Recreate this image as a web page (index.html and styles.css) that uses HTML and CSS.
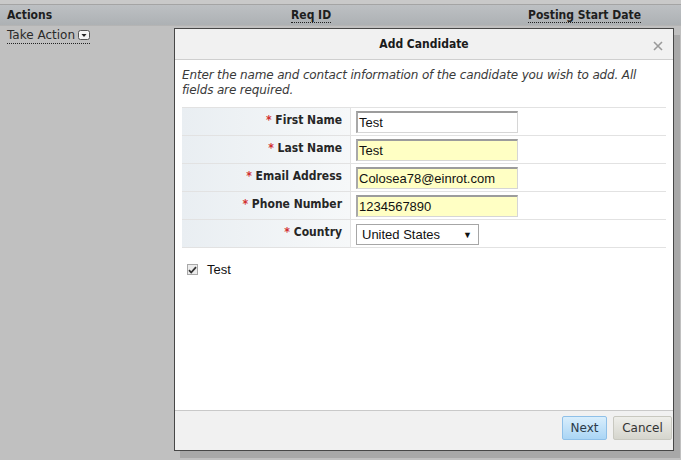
FILE: index.html
```html
<!DOCTYPE html>
<html>
<head>
<meta charset="utf-8">
<link rel="stylesheet" href="styles.css">
</head>
<body>
<div class="page">
  <div class="topstrip"></div>
  <div class="grid-head">
    <div class="col col-actions">Actions</div>
    <div class="col col-req"><span class="dotted">Req ID</span></div>
    <div class="col col-date"><span class="dotted">Posting Start Date</span></div>
  </div>
  <div class="grid-row">
    <span class="take dotted">Take Action <span class="ddicon"><svg width="12" height="10" viewBox="0 0 12 10"><rect x="0.5" y="0.5" width="11" height="9" rx="2" fill="#f4f4f4" stroke="#555"/><path d="M3.5 4h5L6 7z" fill="#222"/></svg></span></span>
  </div>
</div>

<div class="dialog">
  <div class="dlg-head">
    <span class="dlg-title">Add Candidate</span>
    <span class="dlg-close"><svg width="10" height="10" viewBox="0 0 10 10"><path d="M1 1L9 9M9 1L1 9" stroke="#9a9a9a" stroke-width="1.6"/></svg></span>
  </div>
  <div class="dlg-body">
    <p class="intro">Enter the name and contact information of the candidate you wish to add. All fields are required.</p>
    <div class="form">
      <div class="frow">
        <div class="flabel"><span class="req">*</span> First Name</div>
        <div class="fval"><div class="inp">Test</div></div>
      </div>
      <div class="frow">
        <div class="flabel"><span class="req">*</span> Last Name</div>
        <div class="fval"><div class="inp yellow">Test</div></div>
      </div>
      <div class="frow">
        <div class="flabel"><span class="req">*</span> Email Address</div>
        <div class="fval"><div class="inp yellow">Colosea78@einrot.com</div></div>
      </div>
      <div class="frow">
        <div class="flabel"><span class="req">*</span> Phone Number</div>
        <div class="fval"><div class="inp yellow">1234567890</div></div>
      </div>
      <div class="frow">
        <div class="flabel"><span class="req">*</span> Country</div>
        <div class="fval"><div class="sel"><span>United States</span><span class="arrow">&#9660;</span></div></div>
      </div>
    </div>
    <div class="check">
      <span class="cbox"><svg width="9" height="8" viewBox="0 0 9 8"><path d="M1 4.2l2.2 2.3L8 1.2" fill="none" stroke="#333" stroke-width="1.8"/></svg></span>
      <span class="clabel">Test</span>
    </div>
  </div>
  <div class="dlg-foot">
    <button class="btn btn-next">Next</button>
    <button class="btn btn-cancel">Cancel</button>
  </div>
</div>
</body>
</html>
```
FILE: styles.css
```css
html, body {
  margin: 0;
  padding: 0;
}
body {
  background: #c0c0c0;
  font-family: "DejaVu Sans", Verdana, sans-serif;
  font-size: 12px;
  color: #222;
  width: 681px;
  height: 460px;
  overflow: hidden;
  position: relative;
}
.topstrip {
  height: 4px;
  background: #c9c9c9;
  border-bottom: 1px solid #a4a4a4;
}
.grid-head {
  height: 20px;
  background: linear-gradient(#bdc0c3, #adb1b4);
  display: flex;
  align-items: center;
  font-family: "DejaVu Sans Condensed", "DejaVu Sans", sans-serif;
  font-stretch: condensed;
  font-weight: bold;
  font-size: 12px;
  color: #1e1e1e;
  border-bottom: 1px solid #b4b4b4;
}
.col-actions { padding-left: 7px; width: 284px; }
.col-req { width: 237px; }
.dotted {
  border-bottom: 1px dotted #222;
}
.grid-row {
  padding: 2px 0 0 7px;
  color: #2a2a2a;
}
.take {
  display: inline-flex;
  align-items: center;
  gap: 3px;
  padding-bottom: 1px;
}
.ddicon { display: inline-flex; }

.dialog {
  position: absolute;
  left: 174px;
  top: 28px;
  width: 500px;
  height: 423px;
  box-sizing: border-box;
  border: 1px solid #474747;
  background: #fff;
  display: flex;
  flex-direction: column;
  box-shadow: 6px 7px 0 rgba(0,0,0,0.12);
}
.dlg-head {
  height: 30px;
  background: #f1f1f1;
  border-bottom: 1px solid #cfcfcf;
  display: flex;
  align-items: center;
  justify-content: center;
  position: relative;
}
.dlg-title {
  font-family: "DejaVu Sans Condensed", "DejaVu Sans", sans-serif;
  font-stretch: condensed;
  font-size: 12px;
  color: #1a1a1a;
  font-weight: bold;
}
.dlg-close {
  position: absolute;
  right: 10px;
  top: 12px;
  display: flex;
}
.dlg-body {
  flex: 1;
  padding: 8px 7px 0 7px;
}
.intro {
  margin: 0 0 9px 0;
  font-style: italic;
  color: #3a3a3a;
  line-height: 15px;
  font-size: 12px;
  letter-spacing: -0.15px;
}
.form {
  border-top: 1px solid #e2e2e2;
}
.frow {
  display: flex;
  height: 28px;
  border-bottom: 1px solid #e2e2e2;
  box-sizing: border-box;
}
.flabel {
  width: 169px;
  box-sizing: border-box;
  border-right: 1px solid #e2e2e2;
  background: linear-gradient(to right, #e9eef2, #f6f8f9);
  text-align: right;
  padding: 5px 8px 0 0;
  font-family: "DejaVu Sans Condensed", "DejaVu Sans", sans-serif;
  font-stretch: condensed;
  font-weight: bold;
  font-size: 12px;
  color: #262626;
}
.req { color: #d23030; }
.fval {
  padding: 3px 0 0 5px;
}
.inp {
  width: 162px;
  height: 22px;
  box-sizing: border-box;
  border: 1px solid #d6d6d6;
  border-top: 2px solid #9c9c9c;
  border-left: 2px solid #a9a9a9;
  background: #fff;
  font-family: "Liberation Sans", Arial, sans-serif;
  font-size: 13px;
  line-height: 19px;
  padding-left: 1px;
  color: #111;
}
.inp.yellow { background: #ffffc4; }
.sel {
  margin-top: 1px;
  width: 123px;
  height: 21px;
  box-sizing: border-box;
  border: 1px solid #a6a6a6;
  background: #fff;
  display: flex;
  align-items: center;
  justify-content: space-between;
  padding: 0 6px 0 5px;
  font-family: "Liberation Sans", Arial, sans-serif;
  font-size: 13px;
  color: #111;
}
.arrow { font-size: 9px; }
.check {
  display: flex;
  align-items: center;
  margin-top: 14px;
  padding-left: 5px;
  gap: 9px;
}
.cbox {
  width: 11px;
  height: 11px;
  box-sizing: border-box;
  border: 1px solid #a8a8a8;
  background: #ececec;
  display: inline-flex;
  align-items: center;
  justify-content: center;
}
.clabel {
  font-family: "Liberation Sans", Arial, sans-serif;
  font-size: 13px;
  color: #111;
}
.dlg-foot {
  height: 40px;
  background: #f1f1f1;
  border-top: 1px solid #c9c9c9;
  display: flex;
  justify-content: flex-end;
  align-items: flex-start;
  padding: 5px 1px 0 0;
  gap: 6px;
  box-sizing: border-box;
}
.btn {
  height: 24px;
  font-family: "DejaVu Sans", sans-serif;
  font-size: 12px;
  border-radius: 2px;
  padding: 0;
  color: #2b3a48;
}
.btn-next {
  width: 45px;
  border: 1px solid #8fc0e8;
  background: linear-gradient(#d9eefc, #aad5f5);
}
.btn-cancel {
  width: 59px;
  border: 1px solid #c8c8c0;
  background: linear-gradient(#eeeeea, #d5d5cd);
  color: #333;
}
```
